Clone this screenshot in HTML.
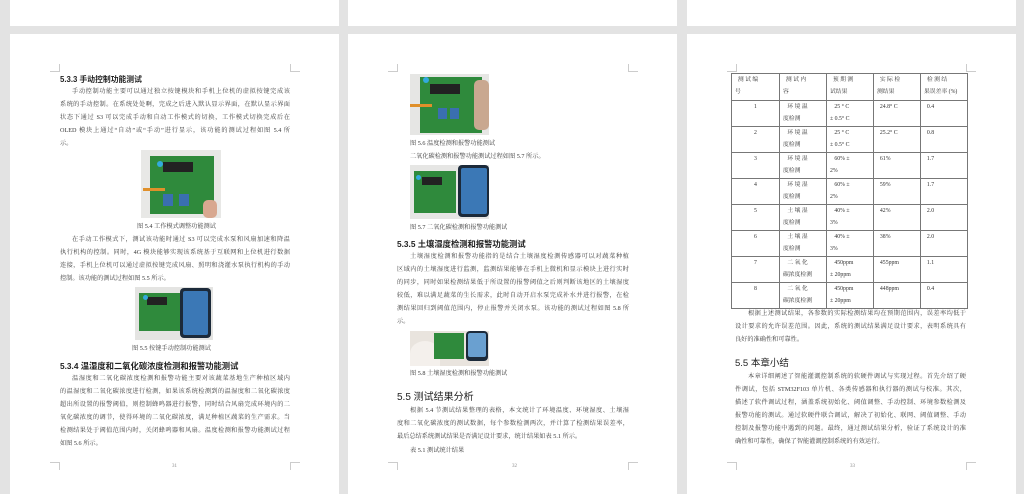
<!DOCTYPE html>
<html><head><meta charset="utf-8"><style>
*{margin:0;padding:0;box-sizing:border-box}
body{width:1024px;height:490px;background:#e3e3e3;position:relative;overflow:hidden;font-family:"Liberation Serif","Noto Serif CJK SC",serif;color:#3a3a3a}
.pg{position:absolute;background:#fff}
.l{position:absolute;font-size:6.2px;line-height:9px;height:9px;overflow:hidden;text-align:justify;text-align-last:justify}
.c{text-align-last:left;white-space:nowrap}
.h{position:absolute;font-family:"Liberation Sans","Noto Sans CJK SC",sans-serif;color:#222;white-space:nowrap}
.n{position:absolute;font-size:5px;color:#888}
.cm{position:absolute;width:10px;height:8px;border-color:#ccc;border-style:solid;border-width:0}
.img{position:absolute;overflow:hidden;background:#dcdcd8}
.pcb{position:absolute;background:#2f8a3c}
.ph{position:absolute;background:#1c2a3a;border-radius:4px}
.scr{position:absolute;background:#3b78b6;border-radius:2px}
table{position:absolute;border-collapse:collapse;font-size:5.8px;color:#333;table-layout:fixed}
td{border:1px solid #777;vertical-align:top;padding:0 3px;line-height:12px;height:26px;white-space:nowrap;overflow:hidden}
tr{height:26px}
</style></head><body>
<div class="pg" style="left:10px;top:0;width:329px;height:26px"></div>
<div class="pg" style="left:348px;top:0;width:329px;height:26px"></div>
<div class="pg" style="left:687px;top:0;width:329px;height:26px"></div>
<div class="pg" style="left:10px;top:34px;width:329px;height:460px"></div>
<div class="pg" style="left:348px;top:34px;width:329px;height:460px"></div>
<div class="pg" style="left:687px;top:34px;width:329px;height:460px"></div>

<div class="cm" style="left:50px;top:64px;border-right-width:1px;border-bottom-width:1px"></div>
<div class="cm" style="left:290px;top:64px;border-left-width:1px;border-bottom-width:1px"></div>
<div class="cm" style="left:50px;top:462px;border-right-width:1px;border-top-width:1px"></div>
<div class="cm" style="left:290px;top:462px;border-left-width:1px;border-top-width:1px"></div>
<div class="cm" style="left:388px;top:64px;border-right-width:1px;border-bottom-width:1px"></div>
<div class="cm" style="left:628px;top:64px;border-left-width:1px;border-bottom-width:1px"></div>
<div class="cm" style="left:388px;top:462px;border-right-width:1px;border-top-width:1px"></div>
<div class="cm" style="left:628px;top:462px;border-left-width:1px;border-top-width:1px"></div>
<div class="cm" style="left:727px;top:64px;border-right-width:1px;border-bottom-width:1px"></div>
<div class="cm" style="left:966px;top:64px;border-left-width:1px;border-bottom-width:1px"></div>
<div class="cm" style="left:727px;top:462px;border-right-width:1px;border-top-width:1px"></div>
<div class="cm" style="left:966px;top:462px;border-left-width:1px;border-top-width:1px"></div>

<!-- LEFT PAGE -->
<div class="h" style="left:60px;top:74px;font-size:7.8px;font-weight:bold">5.3.3 手动控制功能测试</div>
<div class="l" style="left:72px;top:87px;width:218px">手动控制功能主要可以通过独立按键模块和手机上位机的虚拟按键完成该</div>
<div class="l" style="left:60px;top:100px;width:230px">系统的手动控制。在系统处处啊，完成之后进入默认显示界面，在默认显示界面</div>
<div class="l" style="left:60px;top:113px;width:230px">状态下通过 S3 可以完成手动和自动工作模式的切换，工作模式切换完成后在</div>
<div class="l" style="left:60px;top:126px;width:230px">OLED 模块上通过“自动”或“手动”进行显示，该功能的测试过程如图 5.4 所</div>
<div class="l c" style="left:60px;top:139px;width:30px">示。</div>
<div class="img" style="left:141px;top:150px;width:80px;height:68px;background:#e8e8e6">
 <div class="pcb" style="left:9px;top:6px;width:64px;height:58px"></div>
 <div style="position:absolute;left:22px;top:12px;width:30px;height:10px;background:#222"></div>
 <div style="position:absolute;left:16px;top:11px;width:6px;height:6px;border-radius:50%;background:#3ad"></div>
 <div style="position:absolute;left:22px;top:44px;width:10px;height:12px;background:#3a6fb0"></div>
 <div style="position:absolute;left:38px;top:44px;width:10px;height:12px;background:#3a6fb0"></div>
 <div style="position:absolute;left:2px;top:38px;width:22px;height:3px;background:#e0902a"></div>
 <div style="position:absolute;left:62px;top:50px;width:14px;height:18px;background:#d8a890;border-radius:5px"></div>
</div>
<div class="l c" style="left:137px;top:222px">图 5.4 工作模式调整功能测试</div>
<div class="l" style="left:72px;top:235px;width:218px">在手动工作模式下，测试该功能时通过 S3 可以完成水泵和风扇加速和降温</div>
<div class="l" style="left:60px;top:248px;width:230px">执行机构的控制。同时，4G 模块能够实现该系统基于互联网和上位机进行数据</div>
<div class="l" style="left:60px;top:261px;width:230px">连接，手机上位机可以通过虚拟按键完成风扇、照明和浇灌水泵执行机构的手动</div>
<div class="l c" style="left:60px;top:274px">控制。该功能的测试过程如图 5.5 所示。</div>
<div class="img" style="left:135px;top:287px;width:78px;height:53px;background:#e4e4e2">
 <div class="pcb" style="left:4px;top:6px;width:42px;height:38px"></div>
 <div style="position:absolute;left:12px;top:10px;width:20px;height:8px;background:#222"></div>
 <div style="position:absolute;left:8px;top:8px;width:5px;height:5px;border-radius:50%;background:#3ad"></div>
 <div class="ph" style="left:45px;top:1px;width:31px;height:50px"></div>
 <div class="scr" style="left:48px;top:4px;width:25px;height:44px"></div>
</div>
<div class="l c" style="left:132px;top:344px">图 5.5 按键手动控制功能测试</div>
<div class="h" style="left:60px;top:360px;font-size:8.3px;font-weight:bold">5.3.4 温湿度和二氧化碳浓度检测和报警功能测试</div>
<div class="l" style="left:72px;top:374px;width:218px">温湿度和二氧化碳浓度检测和报警功能主要对该蔬菜基地生产种植区域内</div>
<div class="l" style="left:60px;top:387px;width:230px">的温湿度和二氧化碳浓度进行检测，如果该系统检测到的温湿度和二氧化碳浓度</div>
<div class="l" style="left:60px;top:400px;width:230px">超出所设置的报警阈值，则控制蜂鸣器进行报警，同时结合风扇完成环境内的二</div>
<div class="l" style="left:60px;top:413px;width:230px">氧化碳浓度的调节，使得环境的二氧化碳浓度，满足种植区蔬菜的生产需求。当</div>
<div class="l" style="left:60px;top:426px;width:230px">检测结果处于阈值范围内时，关闭蜂鸣器和风扇。温度检测和报警功能测试过程</div>
<div class="l c" style="left:60px;top:439px">如图 5.6 所示。</div>
<div class="n" style="left:172px;top:464px">31</div>

<!-- MIDDLE PAGE -->
<div class="img" style="left:410px;top:74px;width:79px;height:61px;background:#e6e6e4">
 <div class="pcb" style="left:10px;top:3px;width:62px;height:56px"></div>
 <div style="position:absolute;left:20px;top:10px;width:30px;height:10px;background:#222"></div>
 <div style="position:absolute;left:13px;top:3px;width:6px;height:6px;border-radius:50%;background:#3ad"></div>
 <div style="position:absolute;left:28px;top:34px;width:9px;height:11px;background:#3a6fb0"></div>
 <div style="position:absolute;left:40px;top:34px;width:9px;height:11px;background:#3a6fb0"></div>
 <div style="position:absolute;left:0;top:30px;width:22px;height:3px;background:#e0902a"></div>
 <div style="position:absolute;left:64px;top:6px;width:15px;height:50px;background:#c9a890;border-radius:5px"></div>
</div>
<div class="l c" style="left:410px;top:139px">图 5.6 温度检测和报警功能测试</div>
<div class="l c" style="left:410px;top:152px">二氧化碳检测和报警功能测试过程如图 5.7 所示。</div>
<div class="img" style="left:410px;top:165px;width:79px;height:54px;background:#e6e6e4">
 <div class="pcb" style="left:4px;top:6px;width:42px;height:42px"></div>
 <div style="position:absolute;left:12px;top:12px;width:20px;height:8px;background:#222"></div>
 <div style="position:absolute;left:6px;top:10px;width:5px;height:5px;border-radius:50%;background:#3ad"></div>
 <div class="ph" style="left:48px;top:0;width:31px;height:52px"></div>
 <div class="scr" style="left:51px;top:3px;width:26px;height:46px"></div>
</div>
<div class="l c" style="left:410px;top:223px">图 5.7 二氧化碳检测和报警功能测试</div>
<div class="h" style="left:397px;top:238px;font-size:8.3px;font-weight:bold">5.3.5 土壤湿度检测和报警功能测试</div>
<div class="l" style="left:410px;top:252px;width:219px">土壤湿度检测和报警功能指的是结合土壤湿度检测传感器可以对蔬菜种植</div>
<div class="l" style="left:397px;top:265px;width:232px">区域内的土壤湿度进行监测，监测结果能够在手机上微机和显示模块上进行实时</div>
<div class="l" style="left:397px;top:278px;width:232px">的同步，同时如果检测结果低于所设置的报警阈值之后则判断该地区的土壤湿度</div>
<div class="l" style="left:397px;top:291px;width:232px">较低，难以满足蔬菜的生长需求，此时自动开启水泵完成补水并进行报警，在检</div>
<div class="l" style="left:397px;top:304px;width:232px">测结果回归到阈值范围内，停止报警并关闭水泵。该功能的测试过程如图 5.8 所</div>
<div class="l c" style="left:397px;top:317px">示。</div>
<div class="img" style="left:410px;top:331px;width:79px;height:35px;background:#e9e4de">
 <div style="position:absolute;left:0;top:10px;width:30px;height:25px;background:#f4f0ec;border-radius:50% 50% 0 0"></div>
 <div class="pcb" style="left:24px;top:2px;width:30px;height:26px"></div>
 <div class="ph" style="left:56px;top:0;width:22px;height:30px"></div>
 <div class="scr" style="left:58px;top:2px;width:18px;height:24px;background:#6aa0d0"></div>
</div>
<div class="l c" style="left:410px;top:369px">图 5.8 土壤湿度检测和报警功能测试</div>
<div class="h" style="left:397px;top:388px;font-size:10px">5.5 测试结果分析</div>
<div class="l" style="left:410px;top:406px;width:219px">根据 5.4 节测试结果整理的表格，本文统计了环境温度、环境湿度、土壤湿</div>
<div class="l" style="left:397px;top:419px;width:232px">度和二氧化碳浓度的测试数据，每个参数检测两次，并计算了检测结果误差率，</div>
<div class="l c" style="left:397px;top:432px">最后总结系统测试结果是否满足设计要求，统计结果如表 5.1 所示。</div>
<div class="l c" style="left:410px;top:446px">表 5.1 测试统计结果</div>
<div class="n" style="left:512px;top:464px">32</div>

<!-- RIGHT PAGE TABLE -->
<table style="left:731px;top:73px;width:236px">
<colgroup><col style="width:48px"><col style="width:47px"><col style="width:47px"><col style="width:47px"><col style="width:47px"></colgroup>
<tr><td style="height:27px">&nbsp;&nbsp;测 试 编<br>号</td><td>&nbsp;&nbsp;测 试 内<br>容</td><td>&nbsp;&nbsp;预 期 测<br>试结果</td><td>&nbsp;&nbsp;实 际 检<br>测结果</td><td>&nbsp;&nbsp;检 测 结<br>果误差率 (%)</td></tr>
<tr><td style="text-align:center">1</td><td>&nbsp;&nbsp;&nbsp;环 境 温<br>度检测</td><td>&nbsp;&nbsp;&nbsp;25 ° C<br>± 0.5° C</td><td>&nbsp;&nbsp;24.8° C</td><td>&nbsp;&nbsp;0.4</td></tr>
<tr><td style="text-align:center">2</td><td>&nbsp;&nbsp;&nbsp;环 境 温<br>度检测</td><td>&nbsp;&nbsp;&nbsp;25 ° C<br>± 0.5° C</td><td>&nbsp;&nbsp;25.2° C</td><td>&nbsp;&nbsp;0.8</td></tr>
<tr><td style="text-align:center">3</td><td>&nbsp;&nbsp;&nbsp;环 境 湿<br>度检测</td><td>&nbsp;&nbsp;&nbsp;60% ±<br>2%</td><td>&nbsp;&nbsp;61%</td><td>&nbsp;&nbsp;1.7</td></tr>
<tr><td style="text-align:center">4</td><td>&nbsp;&nbsp;&nbsp;环 境 湿<br>度检测</td><td>&nbsp;&nbsp;&nbsp;60% ±<br>2%</td><td>&nbsp;&nbsp;59%</td><td>&nbsp;&nbsp;1.7</td></tr>
<tr><td style="text-align:center">5</td><td>&nbsp;&nbsp;&nbsp;土 壤 湿<br>度检测</td><td>&nbsp;&nbsp;&nbsp;40% ±<br>3%</td><td>&nbsp;&nbsp;42%</td><td>&nbsp;&nbsp;2.0</td></tr>
<tr><td style="text-align:center">6</td><td>&nbsp;&nbsp;&nbsp;土 壤 湿<br>度检测</td><td>&nbsp;&nbsp;&nbsp;40% ±<br>3%</td><td>&nbsp;&nbsp;38%</td><td>&nbsp;&nbsp;2.0</td></tr>
<tr><td style="text-align:center">7</td><td>&nbsp;&nbsp;&nbsp;二 氧 化<br>碳浓度检测</td><td>&nbsp;&nbsp;&nbsp;450ppm<br>± 20ppm</td><td>&nbsp;&nbsp;455ppm</td><td>&nbsp;&nbsp;1.1</td></tr>
<tr><td style="text-align:center">8</td><td>&nbsp;&nbsp;&nbsp;二 氧 化<br>碳浓度检测</td><td>&nbsp;&nbsp;&nbsp;450ppm<br>± 20ppm</td><td>&nbsp;&nbsp;448ppm</td><td>&nbsp;&nbsp;0.4</td></tr>
</table>
<div class="l" style="left:748px;top:309px;width:218px">根据上述测试结果，各参数的实际检测结果均在预期范围内，误差率均低于</div>
<div class="l" style="left:735px;top:322px;width:231px">设计要求的允许误差范围。因此，系统的测试结果满足设计要求，表明系统具有</div>
<div class="l c" style="left:735px;top:335px">良好的准确性和可靠性。</div>
<div class="h" style="left:735px;top:355px;font-size:9.5px">5.5 本章小结</div>
<div class="l" style="left:748px;top:372px;width:218px">本章详细阐述了智能灌溉控制系统的软硬件调试与实现过程。首先介绍了硬</div>
<div class="l" style="left:735px;top:385px;width:231px">件调试，包括 STM32F103 单片机、各类传感器和执行器的测试与校准。其次，</div>
<div class="l" style="left:735px;top:398px;width:231px">描述了软件调试过程，涵盖系统初始化、阈值调整、手动控制、环境参数检测及</div>
<div class="l" style="left:735px;top:411px;width:231px">报警功能的测试。通过软硬件联合调试，解决了初始化、联网、阈值调整、手动</div>
<div class="l" style="left:735px;top:424px;width:231px">控制及报警功能中遇到的问题。最终，通过测试结果分析，验证了系统设计的准</div>
<div class="l c" style="left:735px;top:437px">确性和可靠性，确保了智能灌溉控制系统的有效运行。</div>
<div class="n" style="left:850px;top:464px">33</div>
</body></html>
